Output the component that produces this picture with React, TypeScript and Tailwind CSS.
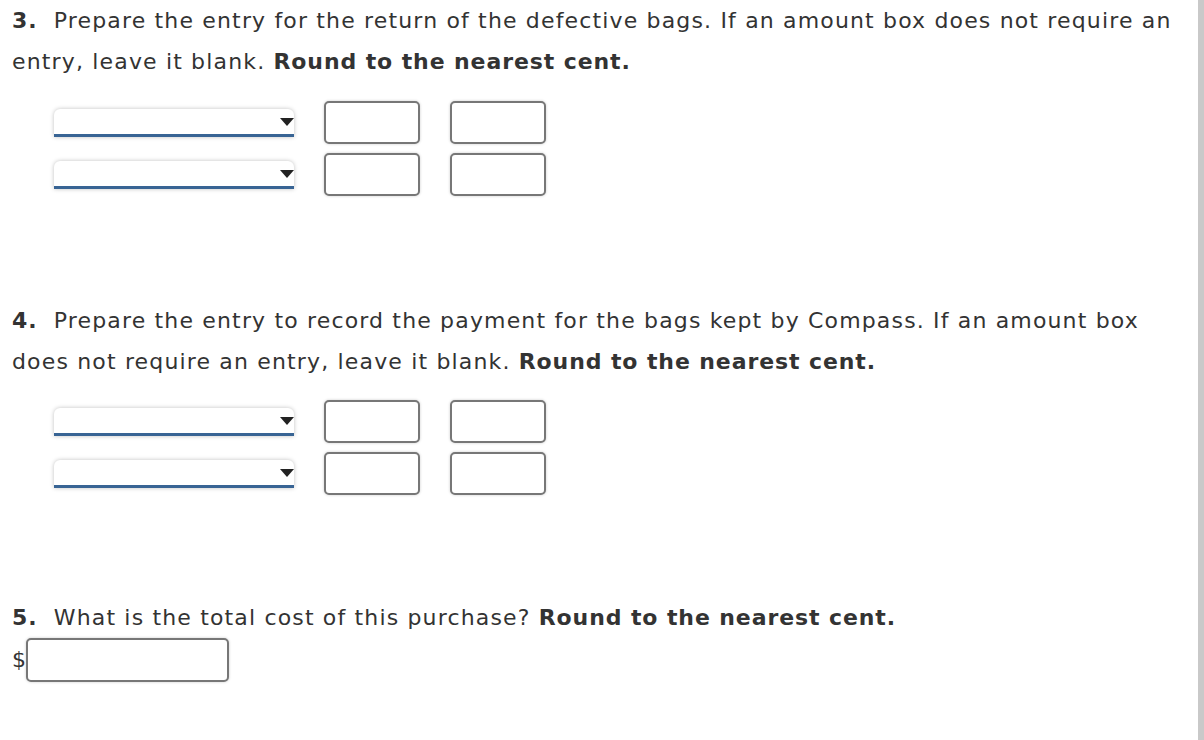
import React from "react";

const font = { fontFamily: '"DejaVu Sans", Verdana, sans-serif' };

function Select() {
  return (
    <div className="relative w-[240px] h-[28px] bg-white rounded-t-[6px] border-b-[3px] border-[#386494] shadow-[0_0_4px_rgba(0,0,0,0.25)]">
      <svg className="absolute right-0 top-[9px]" width="14" height="8" viewBox="0 0 14 8">
        <path d="M0 0 H14 L7 8 Z" fill="#222" />
      </svg>
    </div>
  );
}

function Box() {
  return (
    <div className="w-[96px] h-[43px] bg-white rounded-[5px] border-2 border-[#777] shadow-[0_0_3px_rgba(0,0,0,0.2)]" />
  );
}

function EntryRow() {
  return (
    <div className="flex items-center gap-[30px]">
      <Select />
      <Box />
      <Box />
    </div>
  );
}

function EntryTable() {
  return (
    <div className="flex flex-col gap-[9px] pl-[42px]">
      <EntryRow />
      <EntryRow />
    </div>
  );
}

function B({ children }: { children: React.ReactNode }) {
  return <b className="tracking-[0.9px]">{children}</b>;
}

export default function App() {
  return (
    <div className="w-[1204px] h-[740px] flex bg-white text-[#333]" style={font}>
      <div className="flex-1 pl-[12px] text-[22px] tracking-[1.16px] leading-[41px] whitespace-nowrap">
        <p>
          <B>3.</B>&nbsp; Prepare the entry for the return of the defective bags. If an amount box does not require an
          <br />
          entry, leave it blank. <B>Round to the nearest cent.</B>
        </p>
        <div className="mt-[19px]">
          <EntryTable />
        </div>
        <p className="mt-[104px]">
          <B>4.</B>&nbsp; Prepare the entry to record the payment for the bags kept by Compass. If an amount box
          <br />
          does not require an entry, leave it blank. <B>Round to the nearest cent.</B>
        </p>
        <div className="mt-[18px]">
          <EntryTable />
        </div>
        <p className="mt-[102px]">
          <B>5.</B>&nbsp; What is the total cost of this purchase? <B>Round to the nearest cent.</B>
        </p>
        <div className="flex items-center">
          <span className="leading-[44px] tracking-normal">$</span>
          <div className="w-[203px] h-[44px] bg-white rounded-[5px] border-2 border-[#777] shadow-[0_0_3px_rgba(0,0,0,0.2)]" />
        </div>
      </div>
      <div className="w-[6px] bg-[#c9c9c9]" />
    </div>
  );
}
